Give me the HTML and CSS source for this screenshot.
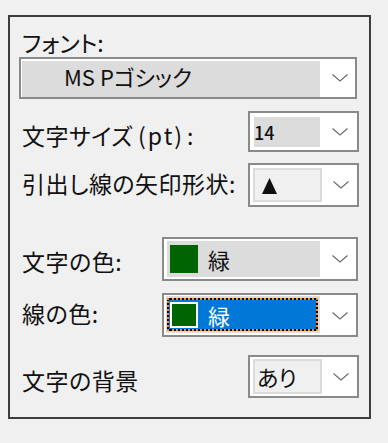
FILE: index.html
```html
<!DOCTYPE html>
<html lang="ja">
<head>
<meta charset="utf-8">
<link rel="stylesheet" href="styles.css">
</head>
<body>
<div class="panel">
  <div class="label label-font">フォント:</div>
  <div class="combo combo-font">
    <div class="field field-sel field-font"><span class="font-name">MS Pゴシック</span></div>
    <span class="chev"><svg width="16" height="8" viewBox="0 0 16 8"><polyline points="0.5,0.5 8,7 15.5,0.5" fill="none" stroke="#6a6a6a" stroke-width="1.1"/></svg></span>
  </div>

  <div class="row row-size">
    <span class="label">文字サイズ<span class="paren">(pt)</span>:</span>
    <div class="combo combo-small combo-size">
      <div class="field field-sel field-size">14</div>
      <span class="chev"><svg width="16" height="8" viewBox="0 0 16 8"><polyline points="0.5,0.5 8,7 15.5,0.5" fill="none" stroke="#6a6a6a" stroke-width="1.1"/></svg></span>
    </div>
  </div>

  <div class="row row-arrow">
    <span class="label">引出し線の矢印形状:</span>
    <div class="combo combo-small combo-arrow">
      <div class="field field-box field-arrow"><svg width="15" height="16" viewBox="0 0 15 16"><polygon points="7.5,0 15,16 0,16" fill="#111"/></svg></div>
      <span class="chev"><svg width="16" height="8" viewBox="0 0 16 8"><polyline points="0.5,0.5 8,7 15.5,0.5" fill="none" stroke="#6a6a6a" stroke-width="1.1"/></svg></span>
    </div>
  </div>

  <div class="row row-tcolor">
    <span class="label">文字の色:</span>
    <div class="combo combo-wide combo-tcolor">
      <div class="field field-sel field-color"><span class="swatch"></span><span class="color-name">緑</span></div>
      <span class="chev"><svg width="16" height="8" viewBox="0 0 16 8"><polyline points="0.5,0.5 8,7 15.5,0.5" fill="none" stroke="#6a6a6a" stroke-width="1.1"/></svg></span>
    </div>
  </div>

  <div class="row row-lcolor">
    <span class="label">線の色:</span>
    <div class="combo combo-wide combo-lcolor">
      <div class="field field-sel field-focus">
        <div class="focus-ring"><span class="swatch swatch-sel"></span><span class="color-name color-name-sel">緑</span></div>
      </div>
      <span class="chev"><svg width="16" height="8" viewBox="0 0 16 8"><polyline points="0.5,0.5 8,7 15.5,0.5" fill="none" stroke="#6a6a6a" stroke-width="1.1"/></svg></span>
    </div>
  </div>

  <div class="row row-bg">
    <span class="label">文字の背景</span>
    <div class="combo combo-small combo-bg">
      <div class="field field-box field-bg">あり</div>
      <span class="chev"><svg width="16" height="8" viewBox="0 0 16 8"><polyline points="0.5,0.5 8,7 15.5,0.5" fill="none" stroke="#6a6a6a" stroke-width="1.1"/></svg></span>
    </div>
  </div>
</div>
</body>
</html>
```

FILE: styles.css
```css
* { box-sizing: border-box; }

html, body {
  margin: 0;
  padding: 0;
  background: #f0f0f0;
}

body {
  width: 388px;
  height: 443px;
  overflow: hidden;
  font-family: "Noto Sans CJK JP", "Noto Sans", sans-serif;
  font-size: 22px;
  color: #111;
  font-feature-settings: "palt";
}

.panel {
  margin: 15px 0 0 8px;
  width: 363px;
  height: 404px;
  border: 2px solid #3c3c3c;
  padding: 13px 10px 0 9px;
  display: flex;
  flex-direction: column;
}

.label {
  padding-left: 3px;
  font-size: 23px;
  letter-spacing: 0.5px;
  line-height: 24px;
  height: 24px;
  white-space: nowrap;
}

.label-font { letter-spacing: 0; }

.paren {
  letter-spacing: 2px;
  margin-left: 5px;
  margin-right: 3px;
}

.combo-font {
  margin-top: 3px;
  width: 338px;
  height: 42px;
}

.combo {
  display: flex;
  align-items: stretch;
  border: 2px solid #8a8a8a;
  background: #fff;
}

.field-sel { background: #dcdcdc; }

.field-box {
  background: #f0f0f0;
  border: 2px solid #dcdcdc;
}

.field-font {
  width: 298px;
  margin: 2px 0 0 1px;
  display: flex;
  align-items: center;
  padding-left: 42px;
}

.font-name {
  line-height: 24px;
  margin-bottom: 6px;
}

.chev {
  flex: 1;
  display: flex;
  align-items: center;
  padding-left: 12px;
}

.row {
  display: flex;
  justify-content: space-between;
  align-items: flex-start;
}

.combo-small { width: 111px; }
.combo-wide { width: 196px; margin-right: 1px; }

.row-size { margin-top: 12px; height: 41px; }
.row-size .label { margin-top: 12px; }
.combo-size { height: 41px; padding: 4px 0 3px 4px; }
.field-size {
  width: 66px;
  font-size: 18px;
  font-weight: 500;
  line-height: 30px;
}

.row-arrow { margin-top: 11px; height: 44px; }
.row-arrow .label { margin-top: 8px; }
.combo-arrow { height: 44px; padding: 3px 0 3px 3px; }
.field-arrow {
  width: 69px;
  display: flex;
  align-items: center;
  padding: 2px 0 0 7px;
}
.combo-arrow .chev { padding-left: 11px; }

.row-tcolor { margin-top: 30px; height: 44px; }
.row-tcolor .label { margin-top: 12px; }
.combo-tcolor { height: 44px; padding: 2px 0 2px 3px; }
.field-color {
  width: 153px;
  display: flex;
  align-items: center;
  padding-left: 3px;
}

.swatch {
  display: block;
  width: 28px;
  height: 28px;
  background: #006400;
  flex: none;
}

.color-name {
  margin-left: 10px;
  line-height: 28px;
}

.row-lcolor { margin-top: 12px; height: 44px; }
.row-lcolor .label { margin-top: 8px; }
.combo-lcolor { height: 44px; padding: 1px 0 0 2px; }
.field-focus {
  width: 154px;
  height: 37px;
  padding: 2px 2px 2px 1px;
}

.focus-ring {
  height: 100%;
  border: 2px dotted #ff8a1a;
  background-color: #000;
  background-image: linear-gradient(#0078d7, #0078d7);
  background-clip: padding-box;
  background-origin: padding-box;
  display: flex;
  align-items: center;
  padding-left: 1px;
}

.focus-ring {
  background-clip: border-box;
  background-size: calc(100% - 4px) calc(100% - 4px);
  background-position: 2px 2px;
  background-repeat: no-repeat;
  background-origin: border-box;
}

.swatch-sel {
  width: 28px;
  height: 26px;
  border: 2px solid #fff;
}

.color-name-sel { color: #fff; }

.row-bg { margin-top: 18px; height: 43px; }
.row-bg .label { margin-top: 13px; }
.combo-bg { height: 43px; padding: 2px 0 2px 3px; }
.field-bg {
  width: 69px;
  line-height: 31px;
  padding-left: 2px;
}
.combo-bg .chev { padding-left: 11px; }
```
